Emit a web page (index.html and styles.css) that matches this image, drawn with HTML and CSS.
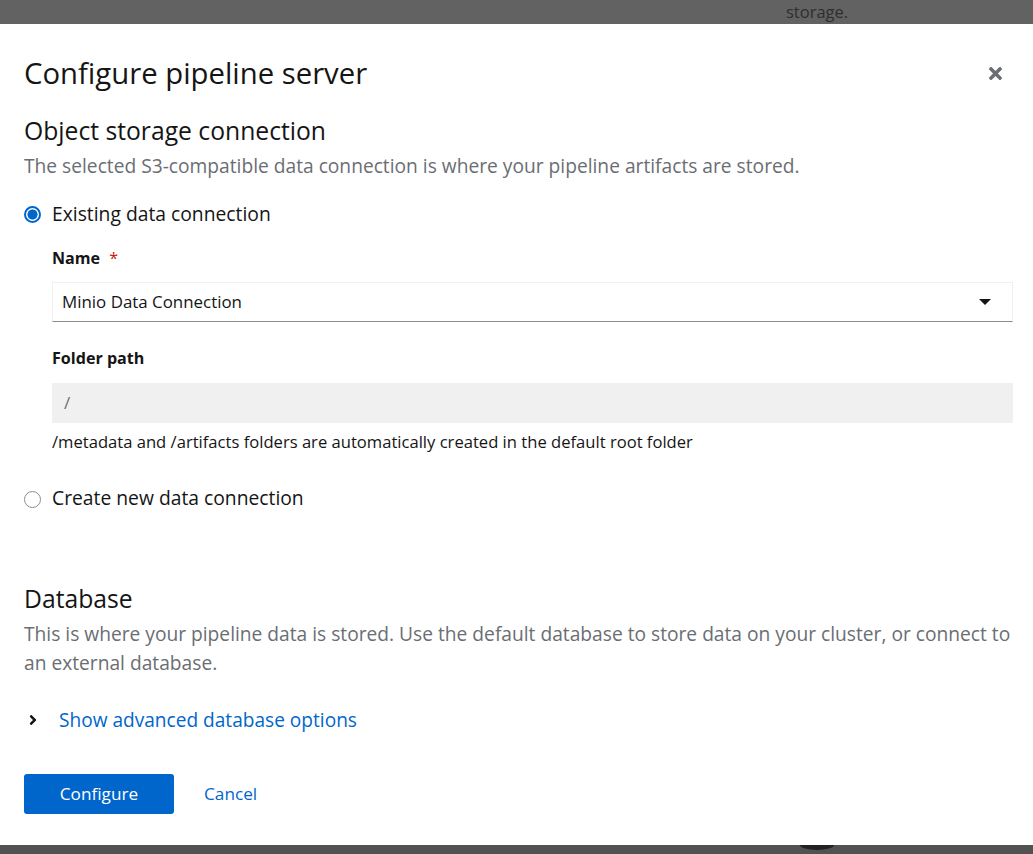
FILE: index.html
```html
<!DOCTYPE html>
<html>
<head>
<meta charset="utf-8">
<link rel="stylesheet" href="styles.css">
</head>
<body>
<div class="backdrop-top"><span class="bg-text">storage.</span></div>
<div class="modal">
  <header class="modal-header">
    <h1 class="modal-title">Configure pipeline server</h1>
    <button class="close" aria-label="Close">
      <svg viewBox="0 80 352 352" width="13" height="13"><path fill="currentColor" d="M242.72 256l100.07-100.07c12.28-12.28 12.28-32.19 0-44.48l-22.24-22.24c-12.28-12.28-32.19-12.28-44.48 0L176 189.28 75.93 89.21c-12.28-12.28-32.19-12.28-44.48 0L9.21 111.45c-12.28 12.28-12.28 32.19 0 44.48L109.28 256 9.21 356.07c-12.28 12.28-12.28 32.19 0 44.48l22.24 22.24c12.28 12.28 32.2 12.28 44.48 0L176 322.72l100.07 100.07c12.28 12.28 32.2 12.28 44.48 0l22.24-22.24c12.28-12.28 12.28-32.19 0-44.48L242.72 256z"/></svg>
    </button>
  </header>

  <section class="section storage">
    <h2 class="section-title">Object storage connection</h2>
    <p class="desc">The selected S3-compatible data connection is where your pipeline artifacts are stored.</p>

    <div class="radio-row first">
      <span class="radio checked"></span>
      <span class="radio-label">Existing data connection</span>
    </div>
    <div class="radio-body">
      <div class="label name-label">Name <span class="req">*</span></div>
      <div class="select">
        <span class="select-text">Minio Data Connection</span>
        <svg class="caret" viewBox="0 0 12 6" width="12" height="6"><path d="M0 0h12L6 6z" fill="#151515"/></svg>
      </div>
      <div class="label folder-label">Folder path</div>
      <div class="input-disabled">/</div>
      <div class="helper">/metadata and /artifacts folders are automatically created in the default root folder</div>
    </div>

    <div class="radio-row second">
      <span class="radio"></span>
      <span class="radio-label">Create new data connection</span>
    </div>
  </section>

  <section class="section db">
    <h2 class="section-title">Database</h2>
    <p class="desc db-desc">This is where your pipeline data is stored. Use the default database to store data on your cluster, or connect to an external database.</p>
    <div class="toggle">
      <svg class="chev" viewBox="0 0 256 512" width="10" height="16"><path fill="#151515" d="M224.3 273l-136 136c-9.4 9.4-24.6 9.4-33.9 0l-22.6-22.6c-9.4-9.4-9.4-24.6 0-33.9l96.4-96.4-96.4-96.4c-9.4-9.4-9.4-24.6 0-33.9L54.3 103c9.4-9.4 24.6-9.4 33.9 0l136 136c9.5 9.4 9.5 24.6.1 34z"/></svg>
      <span class="link">Show advanced database options</span>
    </div>
  </section>

  <footer class="footer">
    <button class="btn primary">Configure</button>
    <button class="btn link-btn">Cancel</button>
  </footer>
</div>
<div class="backdrop-bottom"><span class="blob"></span></div>
</body>
</html>
```

FILE: styles.css
```css
* { box-sizing: border-box; }
html, body { margin: 0; padding: 0; }
body {
  width: 1033px;
  height: 854px;
  overflow: hidden;
  background: #626262;
  font-family: "Open Sans", "Noto Sans", sans-serif;
  color: #151515;
}
.backdrop-top {
  height: 24px;
  background: #626262;
  padding-left: 786px;
  overflow: hidden;
}
.bg-text {
  display: block;
  font-size: 16.5px;
  line-height: 24px;
  color: #2e2e2e;
}
.modal {
  background: #fff;
  height: 821px;
  padding: 32px 20px 31px 24px;
  display: flex;
  flex-direction: column;
}
.modal-header {
  display: flex;
  align-items: center;
  justify-content: space-between;
  padding-right: 11px;
  height: 34px;
}
.modal-title {
  margin: 0;
  font-size: 29.3px;
  font-weight: 400;
  line-height: 34px;
}
.close {
  border: 0;
  background: none;
  padding: 0;
  color: #6a6e73;
  display: flex;
}
.section-title {
  margin: 0;
  font-size: 24.7px;
  font-weight: 400;
  line-height: 26px;
}
.storage { margin-top: 28px; }
.desc {
  margin: 10px 0 0;
  font-size: 19.2px;
  line-height: 24px;
  color: #6a6e73;
}
.radio-row {
  display: flex;
  align-items: center;
  height: 24px;
  font-size: 19.3px;
}
.radio-label { padding-bottom: 2px; }
.radio-row.first { margin-top: 24px; }
.radio-row.second { margin-top: 35px; }
.radio-row.second .radio-label { padding-bottom: 3px; }
.radio {
  width: 17px;
  height: 17px;
  border-radius: 50%;
  border: 1px solid #8a8d90;
  margin-right: 11px;
  flex: none;
  background: #fff;
}
.radio.checked {
  border: 2px solid #06c;
  background: radial-gradient(circle, #06c 0 4.8px, #fff 5.3px);
}
.radio-body { padding-left: 28px; }
.label {
  font-size: 16.1px;
  font-weight: 700;
  line-height: 24px;
}
.name-label { margin-top: 20px; }
.req { color: #c9190b; margin-left: 5px; font-weight: 400; }
.select {
  margin-top: 12px;
  height: 40px;
  border: 1px solid #f0f0f0;
  border-bottom-color: #8a8d90;
  display: flex;
  align-items: center;
  justify-content: space-between;
  padding: 0 21px 0 9px;
  font-size: 16.9px;
}
.select-text { padding-bottom: 2px; }
.folder-label { margin-top: 24px; }
.input-disabled {
  margin-top: 13px;
  height: 40px;
  background: #f0f0f0;
  color: #6a6e73;
  font-size: 17px;
  line-height: 40px;
  padding-left: 12px;
}
.helper {
  margin-top: 8px;
  font-size: 16.6px;
  line-height: 21px;
}
.db { margin-top: 75px; }
.db-desc {
  margin-top: 7px;
  line-height: 29px;
}
.toggle {
  margin-top: 31px;
  display: flex;
  align-items: center;
  height: 24px;
}
.chev { margin-left: 4px; margin-right: 21px; }
.link { color: #06c; font-size: 19.1px; }
.footer {
  margin-top: 42px;
  display: flex;
  align-items: center;
}
.btn {
  font-family: inherit;
  font-size: 17.2px;
  height: 40px;
  border: 0;
  border-radius: 3px;
  padding-bottom: 3px;
  cursor: pointer;
}
.primary {
  width: 150px;
  background: #06c;
  color: #fff;
}
.link-btn {
  background: none;
  color: #06c;
  margin-left: 14px;
  padding-left: 16px;
  padding-right: 16px;
}
.backdrop-bottom {
  height: 9px;
  background: #525252;
  position: relative;
}
.blob {
  position: absolute;
  left: 800px;
  top: 0;
  width: 34px;
  height: 5px;
  background: #222;
  border-radius: 0 0 17px 17px / 0 0 5px 5px;
}
```
